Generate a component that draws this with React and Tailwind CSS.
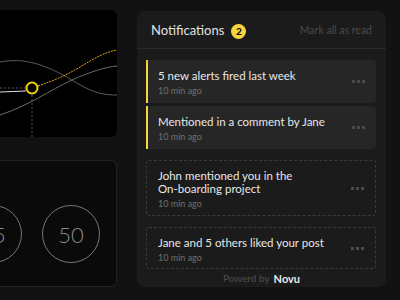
import React from "react";

const items = [
  { title: ["5 new alerts fired last week"], unread: true },
  { title: ["Mentioned in a comment by Jane"], unread: true },
  { title: ["John mentioned you in the", "On-boarding project"], unread: false },
  { title: ["Jane and 5 others liked your post"], unread: false },
];

const Dots = () => (
  <div className="flex gap-[2px] mr-[11px]">
    <span className="w-[3px] h-[3px] bg-[#4a4a4a]" />
    <span className="w-[3px] h-[3px] bg-[#4a4a4a]" />
    <span className="w-[3px] h-[3px] bg-[#4a4a4a]" />
  </div>
);

const Chart = () => (
  <svg width="117" height="127" viewBox="0 0 117 127">
    <path d="M0 52 C 30 46, 55 60, 75 72 C 95 84, 105 85, 117 85" fill="none" stroke="#5a5a5a" strokeWidth="1" />
    <path d="M0 105 C 30 95, 50 80, 72 70 C 90 62, 105 57, 117 56" fill="none" stroke="#6a6a6a" strokeWidth="1" />
    <path d="M38 76 C 55 70, 65 66, 80 57 C 95 48, 105 42, 117 40" fill="none" stroke="#d9a516" strokeWidth="1" strokeDasharray="2 1" />
    <line x1="0" y1="78" x2="26" y2="78" stroke="#555" strokeWidth="1" strokeDasharray="2 2" />
    <line x1="0" y1="82" x2="26" y2="81" stroke="#e8d8e8" strokeWidth="1" />
    <line x1="32" y1="85" x2="32" y2="127" stroke="#555" strokeWidth="1" strokeDasharray="2 2" />
    <circle cx="32" cy="78" r="5.5" fill="none" stroke="#f5d400" strokeWidth="2" />
  </svg>
);

export default function App() {
  return (
    <div className="w-[400px] h-[300px] bg-[#121212] flex overflow-hidden" style={{ fontFamily: "Lato, 'Noto Sans', sans-serif" }}>
      <div className="w-[117px] shrink-0 flex flex-col pt-[10px] gap-[23px]">
        <div className="h-[127px] bg-black rounded-r-md overflow-hidden">
          <Chart />
        </div>
        <div className="h-[127px] bg-[#0a0a0a] border border-l-0 border-[#222] rounded-r-md overflow-hidden flex items-center pt-[21px]">
          <div className="flex items-center gap-[20px] ml-[-36px]">
            <div className="w-[58px] h-[58px] shrink-0 rounded-full border border-[#777] flex items-center justify-center text-[22px] font-light text-[#8a8a8a]">
              25
            </div>
            <div className="w-[58px] h-[58px] shrink-0 rounded-full border border-[#777] flex items-center justify-center text-[22px] font-light text-[#8a8a8a]">
              50
            </div>
          </div>
        </div>
      </div>
      <div className="ml-[20px] mt-[11px] w-[249px] h-[276px] bg-[#1b1b1b] rounded-lg flex flex-col">
        <div className="h-[38px] border-b border-[#2a2a2a] flex items-center justify-between px-[14px] pt-[3px]">
          <div className="flex items-center gap-[7px]">
            <span className="text-[13px] text-[#e2e2e2]">Notifications</span>
            <span className="w-[15px] h-[15px] rounded-full bg-[#f7d53d] text-black text-[10px] font-bold flex items-center justify-center">2</span>
          </div>
          <span className="text-[10.5px] text-[#4a4a4a]">Mark all as read</span>
        </div>
        <div className="flex flex-col pl-[9px] pr-[10px] pt-[11px]">
          {items.map((it, i) =>
            it.unread ? (
              <div key={i} className="mb-[3px] min-h-[43px] bg-[#262626] rounded-r-[4px] border-l-2 border-[#f5d43c] flex items-center justify-between pl-[10px]">
                <div className="flex flex-col pt-[2px]">
                  <span className="text-[11.5px] leading-[13px] text-[#e8e8e8]">{it.title[0]}</span>
                  <span className="text-[9px] text-[#707070] mt-[4px] leading-[10px]">10 min ago</span>
                </div>
                <Dots />
              </div>
            ) : (
              <div key={i} className={`${i === 2 ? "mt-[8px] min-h-[56px]" : "mt-[11px] min-h-[42px]"} border border-dashed border-[#3a3a3a] rounded-[3px] flex items-center justify-between pl-[11px]`}>
                <div className="flex flex-col pt-[2px]">
                  {it.title.map((t, j) => (
                    <span key={j} className="text-[11.5px] leading-[13px] text-[#e8e8e8]">{t}</span>
                  ))}
                  <span className="text-[9px] text-[#707070] mt-[4px] leading-[10px]">10 min ago</span>
                </div>
                <Dots />
              </div>
            )
          )}
        </div>
        <div className="mt-auto mb-[3px] h-[12px] flex items-center justify-center gap-[4px] leading-none">
          <span className="text-[10px] text-[#4e4e4e]">Powerd by</span>
          <span className="text-[11px] font-bold text-[#eaeaea]">Novu</span>
        </div>
      </div>
    </div>
  );
}
